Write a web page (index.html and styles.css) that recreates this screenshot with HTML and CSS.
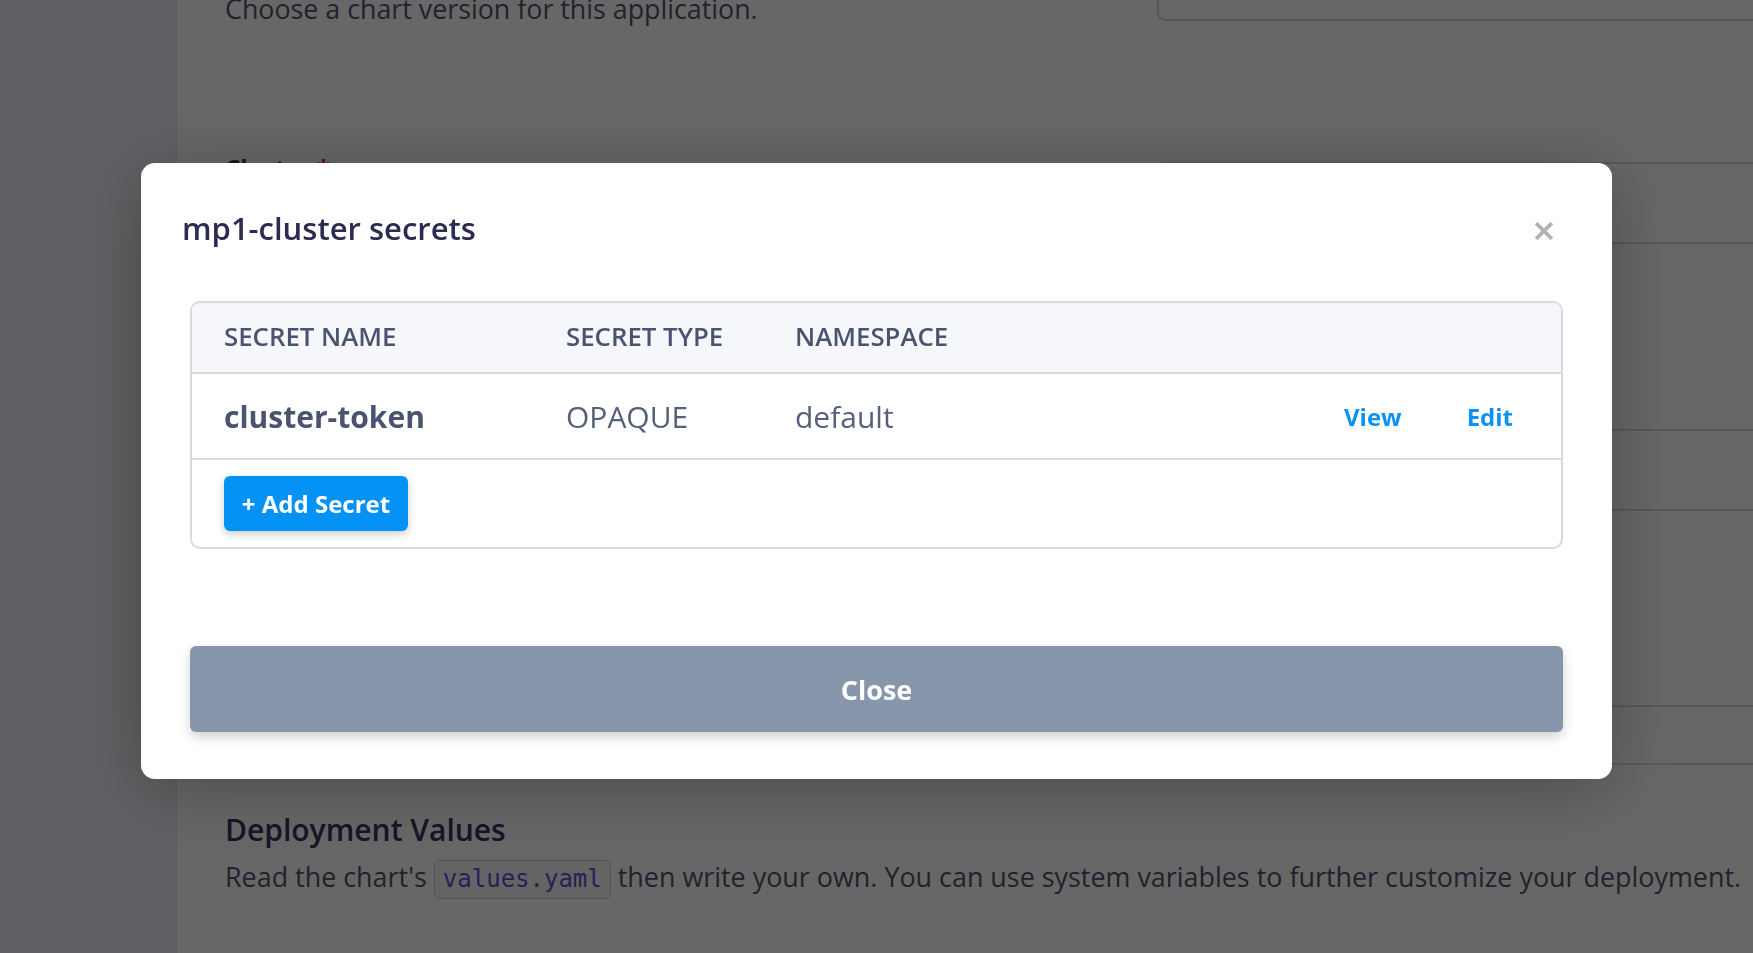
FILE: index.html
```html
<!DOCTYPE html>
<html lang="en">
<head>
<meta charset="utf-8">
<title>mp1-cluster secrets</title>
<link rel="stylesheet" href="styles.css">
</head>
<body>
<div class="app">
  <aside class="sidebar"></aside>
  <main class="main">
    <section class="form-row row-version">
      <div class="row-info">
        <p class="row-desc">Choose a chart version for this application.</p>
      </div>
      <div class="row-field">
        <div class="field-box box-version"></div>
      </div>
    </section>
    <section class="form-row row-cluster">
      <div class="row-info">
        <h3 class="row-label">Cluster <span class="req">*</span></h3>
      </div>
      <div class="row-field">
        <div class="field-box box-a"></div>
        <div class="field-box box-b"></div>
        <div class="field-box box-c"></div>
      </div>
    </section>
    <section class="values">
      <h2 class="values-title">Deployment Values</h2>
      <p class="values-desc">Read the chart's <code class="code">values.yaml</code> then write your own. You can use system variables to further customize your deployment.</p>
    </section>
  </main>
</div>

<div class="backdrop"></div>

<div class="modal" role="dialog" aria-label="mp1-cluster secrets">
  <div class="modal-header">
    <h2 class="modal-title">mp1-cluster secrets</h2>
    <button class="modal-x" aria-label="Close">
      <svg width="18" height="18" viewBox="0 0 18 18"><path d="M2.5 2.5 L15.5 15.5 M15.5 2.5 L2.5 15.5" stroke="#b2b2b2" stroke-width="3.8" stroke-linecap="square"/></svg>
    </button>
  </div>
  <div class="secrets">
    <div class="secrets-head">
      <span class="th">SECRET NAME</span>
      <span class="th">SECRET TYPE</span>
      <span class="th">NAMESPACE</span>
    </div>
    <div class="secrets-row">
      <span class="td td-name">cluster-token</span>
      <span class="td">OPAQUE</span>
      <span class="td">default</span>
      <span class="td-actions">
        <a class="link">View</a>
        <a class="link">Edit</a>
      </span>
    </div>
    <div class="secrets-foot">
      <button class="btn-add">+ Add Secret</button>
    </div>
  </div>
  <button class="btn-close">Close</button>
</div>
</body>
</html>
```
FILE: styles.css
```css
* { box-sizing: border-box; }
html, body {
  margin: 0;
  height: 100%;
  overflow: hidden;
}
body {
  font-family: "Open Sans", "Noto Sans", sans-serif;
  background: #ffffff;
  color: #4a5470;
}
.app {
  display: flex;
  height: 100%;
}
.sidebar {
  flex: none;
  width: 177px;
  background: #eeeff7;
  border-right: 1px solid #e3e4ec;
}
.main {
  flex: 1;
  padding-left: 48px;
  min-width: 0;
}
.form-row {
  display: flex;
  align-items: flex-start;
}
.row-info {
  flex: none;
  width: 932px;
}
.row-field {
  flex: none;
  width: 720px;
}
.field-box {
  border: 2px solid #d9dbe3;
  border-radius: 8px;
  background: #ffffff;
}
.row-version {
  margin-top: -40px;
}
.row-desc {
  margin: 31px 0 0;
  font-size: 26.8px;
  line-height: 36px;
  color: #50566f;
}
.box-version { height: 61px; }
.row-cluster {
  margin-top: 123px;
}
.row-cluster .row-field { padding-top: 12px; }
.row-label {
  margin: 0;
  font-size: 24px;
  line-height: 36px;
  font-weight: 700;
  color: #3d3c66;
}
.req { color: #e0245e; }
.box-a { height: 82px; }
.box-b { height: 82px; margin-top: 185px; }
.box-c { height: 60px; margin-top: 194px; }
.values {
  margin-top: 45px;
}
.values-title {
  margin: 0;
  font-size: 30px;
  line-height: 39px;
  font-weight: 600;
  color: #36355f;
}
.values-desc {
  margin: 8px 0 0;
  font-size: 26.9px;
  line-height: 40px;
  color: #50566f;
  white-space: nowrap;
}
.code {
  display: inline-block;
  font-family: "DejaVu Sans Mono", "Liberation Mono", monospace;
  font-size: 24px;
  line-height: 29px;
  padding: 4px 8px;
  border: 1px solid #c9ced8;
  border-radius: 6px;
  background: #f7f7fa;
  color: #5a55d8;
}

.backdrop {
  position: fixed;
  inset: 0;
  background: rgba(0, 0, 0, 0.595);
}

.modal {
  position: fixed;
  left: 141px;
  top: 163px;
  width: 1471px;
  height: 616px;
  background: #ffffff;
  border-radius: 14px;
  box-shadow: 0 10px 70px rgba(0, 0, 0, 0.28);
  display: flex;
  flex-direction: column;
}
.modal-header {
  display: flex;
  align-items: center;
  justify-content: space-between;
  padding: 45px 59px 0 41px;
}
.modal-title {
  margin: 0;
  font-size: 31px;
  line-height: 40px;
  font-weight: 600;
  color: #2c2b52;
}
.modal-x {
  border: 0;
  background: none;
  padding: 0;
  width: 18px;
  height: 18px;
  margin-top: 6px;
  display: flex;
}
.secrets {
  margin: 53px 49px 0 49px;
  border: 2px solid #d6dae1;
  border-radius: 10px;
  overflow: hidden;
}
.secrets-head,
.secrets-row {
  display: grid;
  grid-template-columns: 342px 229px 1fr auto;
  align-items: center;
  padding-left: 32px;
  border-bottom: 2px solid #d6dae1;
}
.secrets-head {
  height: 71px;
  padding-bottom: 3px;
  background: #f6f7fb;
}
.th {
  font-size: 25.8px;
  font-weight: 600;
  color: #4a5470;
}
.secrets-row {
  height: 86px;
  padding-right: 48px;
}
.td {
  font-size: 30px;
  color: #56607a;
}
.td-name {
  font-weight: 700;
  color: #4a5470;
}
.td-actions {
  display: flex;
  gap: 65px;
}
.link {
  font-size: 24px;
  font-weight: 700;
  color: #0b92f3;
  cursor: pointer;
}
.secrets-foot {
  height: 87px;
  display: flex;
  align-items: center;
  padding-left: 32px;
}
.btn-add {
  height: 55px;
  width: 184px;
  border: 0;
  border-radius: 6px;
  background: #0592f5;
  color: #ffffff;
  font-family: inherit;
  font-size: 24px;
  font-weight: 700;
  box-shadow: 0 3px 8px rgba(0, 0, 0, 0.2);
  padding: 0;
}
.btn-close {
  margin: 97px 49px 0 49px;
  height: 86px;
  border: 0;
  border-radius: 6px;
  background: #8796aa;
  color: #ffffff;
  font-family: inherit;
  font-size: 27px;
  font-weight: 700;
  box-shadow: 0 5px 12px rgba(0, 0, 0, 0.18);
}
```
